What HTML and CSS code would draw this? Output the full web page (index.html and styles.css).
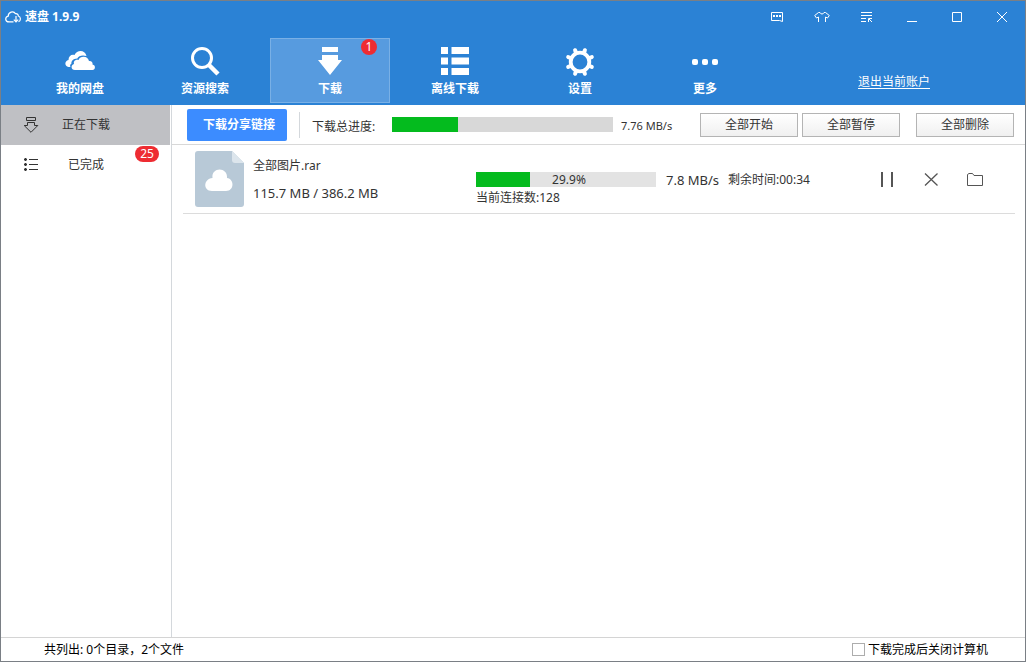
FILE: index.html
```html
<!DOCTYPE html>
<html lang="zh-CN">
<head>
<meta charset="utf-8">
<meta name="viewport" content="width=device-width, initial-scale=1">
<title>速盘 1.9.9</title>
<link rel="stylesheet" href="styles.css">
</head>
<body>
<div class="window">
  <header class="header">
    <div class="titlebar">
      <svg class="logo" width="16" height="12" viewBox="0 0 16 12" fill="none" stroke="currentColor" stroke-width="1.2"><path d="M8.500 10.900H4C-.2 10.900-.2 6 3.200 5.200C3.200 1 8.500-.8 10.500 2.700C12.500 2.500 13.300 3.500 13.300 5C16.200 6 15.900 9.800 13.500 10.700M11 5V10.800M8.800 8.600L11 10.800L13.200 8.600"/></svg>
      <h1 class="title">速盘 1.9.9</h1>
      <div class="controls">
        <button class="control" aria-label="反馈"><svg width="16" height="16" viewBox="0 0 16 16" fill="none" stroke="currentColor"><path d="M2.500 3.500H13.500V12.500L10.500 11.500H2.500Z"/><path d="M4 7H6M7 7H9M10 7H12" stroke-width="2"/></svg></button>
        <button class="control" aria-label="皮肤"><svg width="16" height="16" viewBox="0 0 16 16" fill="none" stroke="currentColor"><path d="M4.500 13V8M11.500 13V8M4.500 8L2.500 9L.7 6.500L4.500 3.500H6C6.500 5.500 9.500 5.500 10 3.500H11.500L15.300 6.500L13.500 9L11.500 8"/></svg></button>
        <button class="control" aria-label="菜单"><svg width="16" height="16" viewBox="0 0 16 16" fill="none" stroke="currentColor"><path d="M2 3.500H13M2 6.500H13M2 9.500H7M2 12.500H7M9.500 13V9.500H13M10 10L13 13"/></svg></button>
        <button class="control" aria-label="最小化"><svg width="16" height="16" viewBox="0 0 16 16" fill="none" stroke="currentColor"><path d="M3 12.500H13"/></svg></button>
        <button class="control" aria-label="最大化"><svg width="16" height="16" viewBox="0 0 16 16" fill="none" stroke="currentColor"><path d="M3.500 3.500H12.500V12.500H3.500Z"/></svg></button>
        <button class="control" aria-label="关闭"><svg width="16" height="16" viewBox="0 0 16 16" fill="none" stroke="currentColor"><path d="M3 3L13 13M13 3L3 13"/></svg></button>
      </div>
    </div>
    <div class="navbar">
      <nav class="nav">
        <button class="tab"><svg width="32" height="32" viewBox="0 0 32 32" fill="currentColor"><path d="M6.500 21H4.500C.5 20.500 .2 15 4.500 14C4.500 10 7.500 8 10.500 9C13 3.500 21 3.500 22.500 10C18 8.500 14.500 10 13.300 12.500C9 12.500 7 15.500 7.500 17.500C6 18.500 5.800 20 6.500 21Z"/><path d="M11 24C6.500 24 6.800 18.500 10 18C9 14.500 12.500 13 14.500 14C16 9.500 24 9.500 25 15C28 14.800 29 17 28.500 18.500C32 19 31.500 24 28.500 24Z"/></svg><span>我的网盘</span></button>
        <button class="tab"><svg width="32" height="32" viewBox="0 0 32 32" fill="none" stroke="currentColor"><circle cx="13" cy="12" r="9.500" stroke-width="3"/><path d="M19 18L29 28" stroke-width="4.500"/></svg><span>资源搜索</span></button>
        <button class="tab tab-active" aria-current="page"><svg width="32" height="32" viewBox="0 0 32 32" fill="currentColor"><path d="M8 1H24V6H8ZM8 9H24V14H28L16 29L4 14H8Z"/></svg><span>下载</span><b class="badge tab-badge">1</b></button>
        <button class="tab"><svg width="32" height="32" viewBox="0 0 32 32" fill="currentColor"><path d="M2 1H9V8H2ZM12.500 1H30V8H12.500ZM2 11.500H9V18.500H2ZM12.500 11.500H30V18.500H12.500ZM2 22H9V29H2ZM12.500 22H30V29H12.500Z"/></svg><span>离线下载</span></button>
        <button class="tab"><svg width="32" height="32" viewBox="-16 -16 32 32" fill="none" stroke="currentColor"><circle r="9.300" stroke-width="3.800"/><path d="M4 -9.500L4.900 -11.800M9.500 -4L11.800 -4.900M9.500 4L11.800 4.900M4 9.500L4.900 11.800M-4 9.500L-4.900 11.800M-9.500 4L-11.800 4.900M-9.500 -4L-11.800 -4.900M-4 -9.500L-4.900 -11.800" stroke-width="4" stroke-linecap="round"/></svg><span>设置</span></button>
        <button class="tab"><svg width="32" height="32" viewBox="0 0 32 32" fill="currentColor"><rect x="3" y="13" width="6" height="6" rx="2"/><rect x="13" y="13" width="6" height="6" rx="2"/><rect x="23" y="13" width="6" height="6" rx="2"/></svg><span>更多</span></button>
      </nav>
      <a class="logout" href="#">退出当前账户</a>
    </div>
  </header>

  <div class="body">
    <aside class="sidebar">
      <button class="side-item side-active"><svg width="16" height="16" viewBox="0 0 16 16" fill="none" stroke="currentColor"><path d="M3.500 .5H12.500V3.500H3.500ZM4.500 5.500H11.500V8.500H14.800L8 15.300L1.200 8.500H4.500Z"/></svg><span>正在下载</span></button>
      <button class="side-item"><svg width="16" height="16" viewBox="0 0 16 16" fill="none" stroke="currentColor"><path d="M6 2.500H15M6 7.500H15M6 12.500H15"/><path d="M1 2.500H4M1 7.500H4M1 12.500H4M2.500 1V4M2.500 6V9M2.500 11V14" stroke-width="1.500"/></svg><span>已完成</span><b class="badge side-badge">25</b></button>
    </aside>

    <main class="main">
      <div class="toolbar">
        <button class="primary">下载分享链接</button>
        <div class="total">
          <span class="total-label" id="total-label">下载总进度:</span>
          <div class="bar total-bar" role="progressbar" aria-labelledby="total-label" aria-valuenow="30"><div class="fill" style="width:30%"></div></div>
          <span class="total-speed">7.76 MB/s</span>
        </div>
        <div class="actions">
          <button class="action">全部开始</button>
          <button class="action">全部暂停</button>
          <button class="action action-delete">全部删除</button>
        </div>
      </div>

      <ul class="list">
        <li class="item">
          <svg class="file" width="49" height="56" viewBox="0 0 49 56"><path d="M3 0H37L49 12V53Q49 56 46 56H3Q0 56 0 53V3Q0 0 3 0Z" fill="#b8c9d7"/><path d="M37 0L49 12H40Q37 12 37 9Z" fill="#dce5ec"/><path d="M17 40C8 40 8 28 17.500 27C16 15.500 33 15.500 32 27C39.500 28 39.500 40 31 40Z" fill="#fff"/></svg>
          <div class="file-info">
            <span>全部图片.rar</span>
            <span class="size">115.7 MB / 386.2 MB</span>
          </div>
          <div class="progress">
            <div class="bar item-bar" role="progressbar" aria-label="全部图片.rar" aria-valuenow="29.9"><div class="fill" style="width:29.9%"></div><span class="percent">29.9%</span></div>
            <span>当前连接数:128</span>
          </div>
          <span class="speed">7.8 MB/s</span>
          <span class="remain">剩余时间:00:34</span>
          <div class="item-actions">
            <button class="tool" aria-label="暂停"><svg width="18" height="18" viewBox="0 0 18 18" fill="none" stroke="currentColor" stroke-width="2"><path d="M4 2V17M14 2V17"/></svg></button>
            <button class="tool" aria-label="取消"><svg width="18" height="18" viewBox="0 0 18 18" fill="none" stroke="currentColor" stroke-width="1.300"><path d="M3 3.500L15.500 15.500M15.500 3.500L3 15.500"/></svg></button>
            <button class="tool" aria-label="打开文件夹"><svg width="18" height="18" viewBox="0 0 18 18" fill="none" stroke="currentColor"><path d="M1.500 15.500V4.500L3 3.500H6.500L8 5.500H16.500V15.500Z"/></svg></button>
          </div>
        </li>
      </ul>
    </main>
  </div>

  <footer class="footer">
    <span>共列出: 0个目录，2个文件</span>
    <label class="shutdown"><input class="check" type="checkbox">下载完成后关闭计算机</label>
  </footer>
</div>
</body>
</html>
```
FILE: styles.css
```css
* {
  box-sizing: border-box;
}

body {
  margin: 0;
  color: #333;
  background: #fff;
  font: 12px/16px "Noto Sans", "Noto Sans CJK SC", sans-serif;
}

button {
  padding: 0;
  border: 0;
  background: none;
  color: inherit;
  font: inherit;
}

svg {
  display: block;
  flex: none;
}

.window {
  display: flex;
  flex-direction: column;
  min-height: 100vh;
  border: 1px solid #7a7f85;
}

.header {
  padding-bottom: 2px;
  background: #2b82d5;
  color: #fff;
}

.titlebar {
  display: flex;
  align-items: center;
  height: 31px;
  padding-left: 4px;
}

.title {
  margin: 0 0 0 4px;
  font-size: 12px;
  font-weight: 700;
}

.controls {
  display: flex;
  margin: 0 1px 0 auto;
}

.control {
  display: flex;
  align-items: center;
  justify-content: center;
  width: 45px;
  height: 30px;
}

.navbar {
  display: flex;
  align-items: center;
  justify-content: space-between;
  padding: 6px 95px 0 19px;
}

.nav {
  display: flex;
  gap: 5px;
}

.tab {
  position: relative;
  display: flex;
  flex-direction: column;
  align-items: center;
  gap: 3px;
  width: 120px;
  height: 65px;
  padding-top: 7px;
  border: 1px solid transparent;
  font-weight: 700;
}

.tab-active {
  border-color: #79b0e6;
  background: #579bdf;
}

.badge {
  position: absolute;
  height: 16px;
  border-radius: 8px;
  background: #ee2c32;
  color: #fff;
  font-weight: 400;
  text-align: center;
}

.tab-badge {
  top: 0;
  right: 12px;
  width: 16px;
}

.logout {
  margin-top: 22px;
  color: inherit;
  text-underline-offset: 2px;
}

.body {
  display: flex;
  flex: 1;
}

.sidebar {
  flex: none;
  width: 171px;
  padding-right: 1px;
  border-right: 1px solid #d4d8dc;
}

.side-item {
  position: relative;
  display: flex;
  align-items: center;
  width: 100%;
  height: 40px;
  padding-left: 22px;
}

.side-item span {
  width: 80px;
  margin-left: 7px;
  text-align: center;
}

.side-active {
  background: #bfc0c4;
}

.side-badge {
  top: 1px;
  right: 11px;
  width: 24px;
}

.main {
  flex: 1;
  min-width: 0;
}

.toolbar {
  display: flex;
  align-items: center;
  height: 40px;
  padding: 0 11px 0 15px;
  border-bottom: 1px solid #d8d8d8;
}

.primary {
  width: 100px;
  height: 32px;
  padding-left: 4px;
  border-radius: 2px;
  background: #3c8cff;
  color: #fff;
  font-weight: 700;
}

.total {
  display: flex;
  flex: 1;
  align-items: center;
  height: 26px;
  margin-left: 12px;
  padding-left: 12px;
  border-left: 1px solid #d4d8dc;
}

.total-label {
  padding-top: 4px;
}

.bar {
  position: relative;
  height: 15px;
  background: #e3e3e3;
}

.fill {
  height: 100%;
  background: #04bb1e;
}

.total-bar {
  flex: 1;
  margin: 0 8px 0 17px;
  background: #d8d8d8;
}

.total-speed {
  width: 79px;
  padding-top: 2px;
  font-size: 11px;
}

.actions {
  display: flex;
  gap: 4px;
}

.action {
  width: 98px;
  height: 24px;
  border: 1px solid #b4b4b4;
  background: linear-gradient(#fff, #f0f0f0);
}

.action-delete {
  margin-left: 12px;
}

.list {
  margin: 0;
  padding: 0 10px 0 11px;
  list-style: none;
}

.item {
  display: flex;
  align-items: center;
  height: 69px;
  padding-left: 12px;
  border-bottom: 1px solid #dcdcdc;
}

.file-info {
  display: flex;
  flex: 1;
  flex-direction: column;
  gap: 11px;
  margin-left: 9px;
}

.size,
.speed {
  font-size: 13px;
}

.progress {
  display: flex;
  flex-direction: column;
  gap: 3px;
  width: 180px;
  padding-top: 19px;
}

.percent {
  position: absolute;
  inset: 0;
  padding-left: 6px;
  line-height: 16px;
  text-align: center;
}

.speed,
.remain {
  padding-top: 2px;
}

.speed {
  width: 54px;
  margin-left: 10px;
}

.remain {
  width: 150px;
  margin-left: 8px;
}

.item-actions {
  display: flex;
  gap: 26px;
  margin-right: 31px;
  color: #555;
}

.footer {
  display: flex;
  align-items: center;
  justify-content: space-between;
  height: 24px;
  padding: 0 37px 0 43px;
  border-top: 1px solid #d4d4d4;
  color: #000;
}

.shutdown {
  display: flex;
  align-items: center;
  gap: 3px;
}

.check {
  width: 13px;
  height: 13px;
  margin: 0;
  border: 1px solid #adadad;
  background: #fff;
  appearance: none;
}

.check:checked {
  background: #2b82d5;
}
```
